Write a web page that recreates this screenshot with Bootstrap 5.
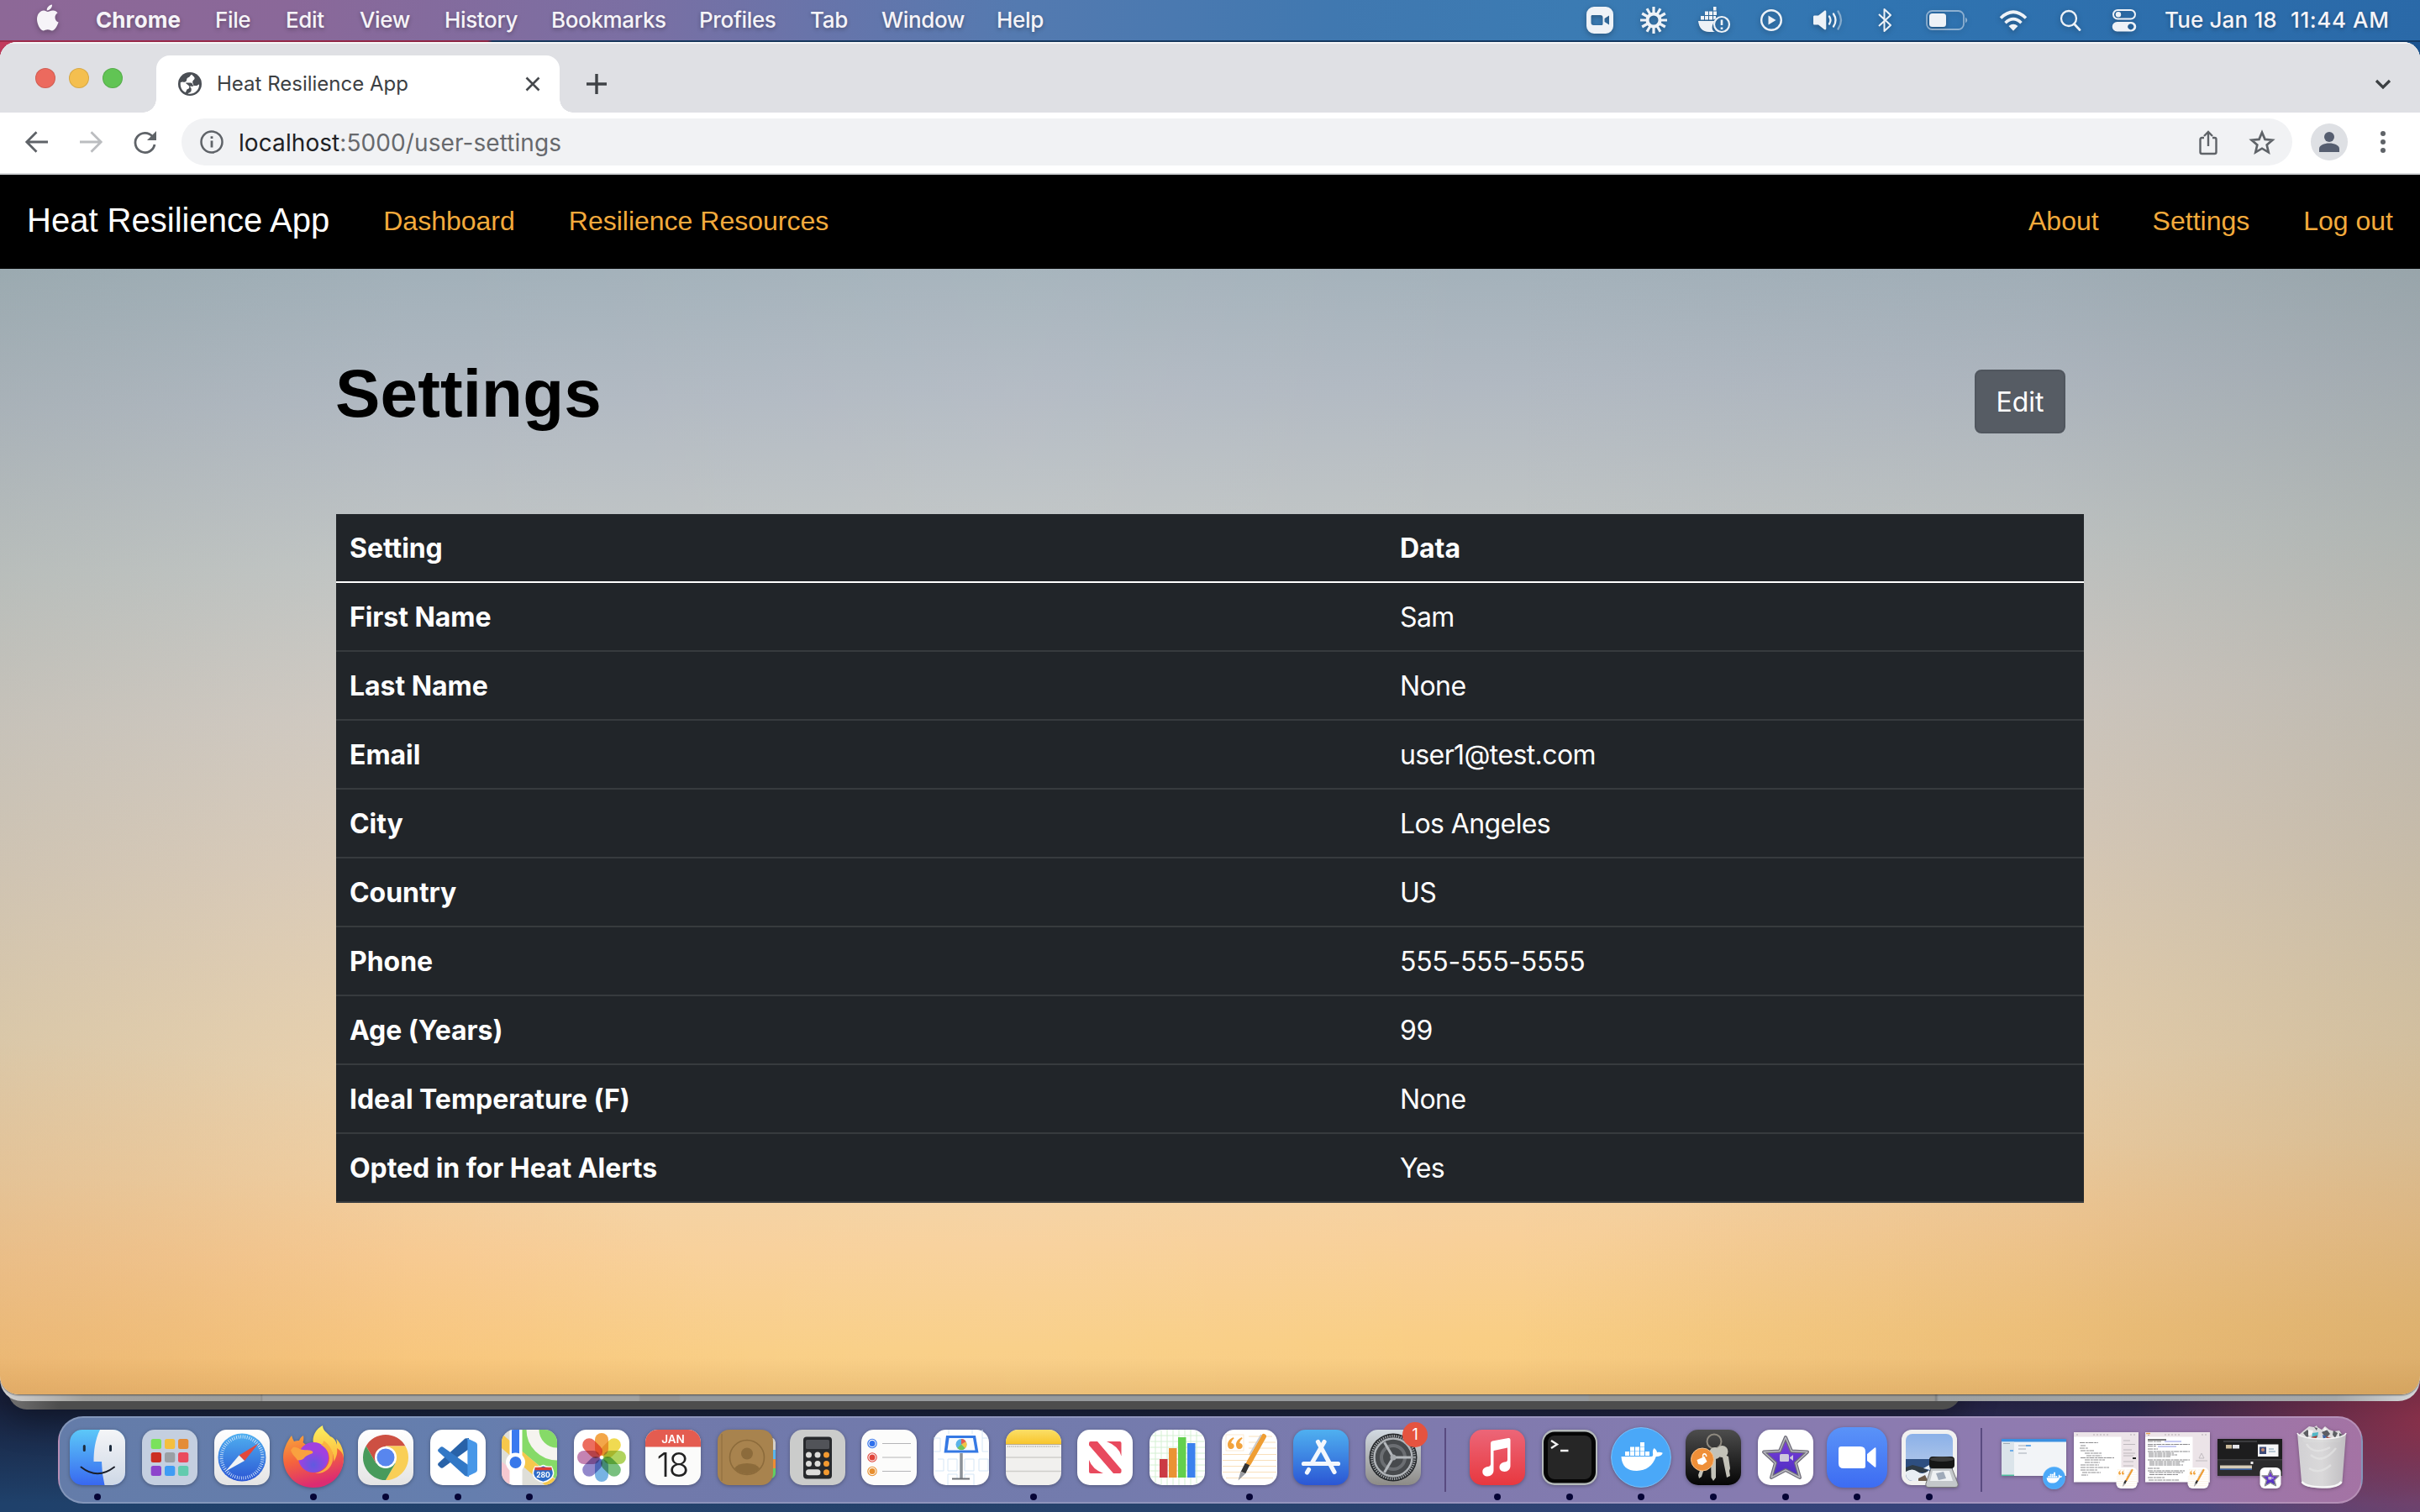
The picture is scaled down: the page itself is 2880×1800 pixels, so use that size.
<!DOCTYPE html>
<html lang="en">
<head>
<meta charset="utf-8">
<meta name="viewport" content="width=device-width, initial-scale=1">
<title>Heat Resilience App</title>
<link href="https://cdn.jsdelivr.net/npm/bootstrap@5.3.0/dist/css/bootstrap.min.css" rel="stylesheet">
<style>
  :root { font-size: 32px; }
  body { font-family: Inter, "Noto Sans", sans-serif; margin: 0; overflow: hidden; }
  svg { display: block; overflow: visible; }
  .desktop {
    width: 2880px; height: 1800px; overflow: hidden;
    background:
      radial-gradient(ellipse 380px 170px at 2920px 1690px, rgba(165,50,72,.8), rgba(165,50,72,0)),
      linear-gradient(180deg, rgba(20,12,30,.62) 1670px, rgba(20,12,30,.5) 1690px, rgba(20,20,40,0) 1790px),
      linear-gradient(90deg, #1f416b 0, #27426c 50%, #36437a 78%, #55497d 100%);
  }
  /* system menu bar */
  .sysbar {
    height: 48px; color: #f6f4f8; font-size: 26px; font-weight: 500; line-height: 48px;
    background: linear-gradient(95deg, #8d6897 0, #8a6899 12%, #7b6fa3 26%, #6575ab 35%, #547ab0 42%, #4078b0 55%, #3b7bb3 65%, #3074b1 78%, #2a69a8 100%);
    text-shadow: 0 2px 5px rgba(0,0,0,.3);
  }
  .sysbar svg { filter: drop-shadow(0 2px 3px rgba(0,0,0,.28)); }
  .sys-menu { display: grid; grid-template-columns: 114px 142px 84px 88px 101px 127px 176px 132px 85px 137px 80px; letter-spacing: -.35px; }
  .sys-menu .app-name { font-weight: 700; letter-spacing: .1px; }
  .sys-status { display: grid; grid-template-columns: 64px 64px 80px 56px 80px 54px 94px 64px 72px 56px 20px 150px 154px; justify-items: center; align-items: center; }
  .sys-status span { justify-self: start; white-space: nowrap; letter-spacing: .15px; }
  .sys-status .clock-time { letter-spacing: .6px; }
  .seam { height: 2px; background: linear-gradient(90deg, #a02c4c 0, #8e2444 580px, #17375c 586px, #123a66 2880px); }
  /* browser window and the ones behind it */
  .stack { height: 1610px; position: relative; background: linear-gradient(90deg, #c23a5c 30px, #1c5490 60px) 0 0 / 100% 30px no-repeat; }
  .browser { height: 1610px; border-radius: 20px 20px 22px 22px; overflow: hidden; position: relative; z-index: 3; background: #fff; box-shadow: inset 0 2px #f3f4f5, 0 1px 2px rgba(0,0,0,.5); }
  .back-a { position: absolute; z-index: 2; inset: 1500px 0 -8px 0; border-radius: 0 0 26px 26px; background: linear-gradient(90deg, #d2d2d2 0, #a3a29f 100px, #9d9d9b 310px, #8b8b89 311px, #a1a2a2 313px, #a1a2a2 760px, #949392 762px, #949392 808px, #969a9d 810px, #969a9d 1890px, #989793 1892px, #989793 2302px, #7d7f80 2304px, #9ea1a2 2307px, #a5a8aa 2780px, #d7d9da 2880px); }
  .back-b { position: absolute; z-index: 1; top: 1500px; bottom: -18px; left: 10px; width: 2324px; border-radius: 0 0 22px 22px; background: linear-gradient(90deg, #727171, #4d4d4d 60px); box-shadow: 0 10px 40px rgba(0,0,0,.4); }
  .tabstrip { height: 84px; background: #dfe0e4; box-shadow: inset 0 2px #f6f6f7; padding: 16px 0 0 42px; }
  .light-dot { width: 24px; height: 24px; border-radius: 50%; margin-right: 16px; box-shadow: inset 0 0 0 1px rgba(0,0,0,.12); }
  .light-close { background: #ec6a5e; }
  .light-min { background: #f4bf4f; }
  .light-max { background: #61c454; }
  .lights { width: 144px; height: 54px; }
  .tabcard { width: 480px; height: 68px; background: #fff; border-radius: 16px 16px 0 0; position: relative; padding: 0 23px 0 26px; font-size: 24px; color: #3c4043; }
  .tabcard::before, .tabcard::after { content: ""; position: absolute; bottom: 0; width: 16px; height: 16px; }
  .tabcard::before { left: -16px; background: radial-gradient(circle at 0 0, transparent 15.5px, #fff 16px); }
  .tabcard::after { right: -16px; background: radial-gradient(circle at 100% 0, transparent 15.5px, #fff 16px); }
  .tab-title { padding-left: 18px; }
  .tab-plus { margin-left: 32px; }
  .tab-caret { margin-right: 35px; }
  .toolbar { height: 74px; background: #fff; border-bottom: 2px solid #d5d7da; padding: 0 32px 2px 28px; }
  .omnibox { height: 56px; width: 2512px; border-radius: 28px; background: #f1f2f4; padding: 0 21px 0 22px; font-size: 28px; letter-spacing: .08px; color: #67696d; margin-left: 28px; }
  .omnibox b { font-weight: 400; color: #202124; }
  .omni-url { padding: 2px 0 0 18px; }
  .avatar { width: 44px; height: 44px; border-radius: 50%; background: #dee0e4; overflow: hidden; margin: 0 38px 0 22px; }
  /* the application page */
  .app-nav { height: 112px; background: #000; padding: 0 32px; font-family: "Liberation Sans", Arial, sans-serif; --bs-navbar-brand-margin-end: 64px; }
  .app-nav .navbar-brand { color: #fff; font-size: 40px; padding: 0 0 4px; line-height: 60px; }
  .app-nav .nav-link { color: #f3aa3c; padding: 0 0 2px; font-size: 32px; }
  .app-nav .navbar-nav { flex-direction: row; gap: 64px; }
  .app-page {
    height: 1340px; padding: 101px 400px 0;
    background:
      linear-gradient(180deg, rgba(150,90,20,0) 1296px, rgba(150,90,20,.13) 1340px),
      radial-gradient(ellipse 900px 420px at 0 100%, rgba(240,160,90,.38), rgba(240,160,90,0)),
      radial-gradient(ellipse 1100px 420px at 100% 100%, rgba(222,152,80,.34), rgba(222,152,80,0)),
      linear-gradient(90deg, rgba(105,120,105,.11) 0, rgba(105,120,105,0) 17%, rgba(255,255,255,.05) 42%, rgba(255,255,255,0) 62%, rgba(70,85,95,.05) 84%, rgba(80,92,80,.16) 100%),
      linear-gradient(179deg, #a1b0b9 0, #b1b9c2 12%, #c2c6c5 26%, #d2cbc3 39%, #dccdbb 52%, #e7d1b1 65%, #f1d3a8 78%, #f8d09a 85%, #f9ce84 94%, #f8cb80 100%);
  }
  .app-page h1 { font-family: "Liberation Sans", Arial, sans-serif; font-weight: 700; font-size: 80px; color: #000; letter-spacing: .15px; margin: 0 0 95px -1px; }
  .btn-edit { --bs-btn-bg: #565c64; --bs-btn-border-color: #50565e; --bs-btn-color: #fff; --bs-btn-border-width: 2px; --bs-btn-border-radius: 8px; margin: 19px 22px 0 0; height: 76px; width: 108px; padding: 12px 0 10px; }
  .app-table { --bs-table-bg: #212529; --bs-table-border-color: #373b3e; color: #fff; font-size: 32px; line-height: 48px; margin: 0; }
  .app-table > :not(caption) > * > * { padding: 17px 16px 15px; border-bottom-width: 2px; }
  .app-table thead th { border-bottom-color: #fff; }
  .app-table th { font-weight: 700; letter-spacing: -.05px; }
  .app-table td { letter-spacing: -.6px; }
  .app-table .cell-digits { letter-spacing: -.3px; }
  .app-table .col-setting { width: 1250px; }
  /* dock */
  .dock { margin: 26px 0 0 69px; width: 2743px; height: 104px; border-radius: 30px; padding-left: 2.4px; border: 2px solid rgba(255,255,255,.2);
    background: linear-gradient(90deg, #647ca9 0, #657eae 18%, #7079ab 26%, #737bad 45%, #7f7aae 60%, #857bb0 72%, #907bb0 86%, #a473a4 100%); position: relative; z-index: 5; }
  .slot { width: 85.67px; padding-top: 14px; position: relative; display: flex; flex-direction: column; align-items: center; flex: none; }
  .slot > svg { width: 66px; height: 66px; filter: drop-shadow(0 1px 2px rgba(0,0,0,.3)); }
  .slot.running::after { content: ""; width: 8px; height: 8px; border-radius: 50%; background: #060536; margin-top: 10px; }
  .rule { width: 38.3px; padding-top: 12px; flex: none; }
  .rule::after { content: ""; display: block; width: 2px; height: 76px; margin: 0 auto; background: #594b80; }
  .alert-count { position: absolute; left: 54px; top: 5px; width: 30px; height: 30px; border-radius: 50%; background: #e5533f; color: #fff; font-size: 18px; line-height: 30px; text-align: center; }
  .petal { mix-blend-mode: multiply; }
</style>
</head>
<body>
<svg width="0" height="0" class="position-absolute" aria-hidden="true">
  <defs>
    <linearGradient id="gFinder" x2="0" y2="1"><stop stop-color="#5cc8f8"/><stop offset="1" stop-color="#3868f0"/></linearGradient>
    <linearGradient id="gPaper" x2="0" y2="1"><stop stop-color="#fff"/><stop offset="1" stop-color="#e4e4e4"/></linearGradient>
    <linearGradient id="gFaceR" x2="0" y2="1"><stop stop-color="#f4f5f7"/><stop offset="1" stop-color="#ced8e6"/></linearGradient>
    <linearGradient id="gBlue" x2="0" y2="1"><stop stop-color="#4fb0f0"/><stop offset="1" stop-color="#2b56d4"/></linearGradient>
    <linearGradient id="gZoom" x2="0" y2="1"><stop stop-color="#5a93f8"/><stop offset="1" stop-color="#3d6cf2"/></linearGradient>
    <linearGradient id="gMusic" x2="0" y2="1"><stop stop-color="#ec6678"/><stop offset="1" stop-color="#e8383f"/></linearGradient>
    <linearGradient id="gFox" x2=".3" y2="1"><stop stop-color="#f8a83c"/><stop offset=".5" stop-color="#f5653c"/><stop offset="1" stop-color="#dc2c72"/></linearGradient>
    <linearGradient id="gFlame" x2="0" y2="1"><stop stop-color="#fdf060"/><stop offset=".5" stop-color="#fbc040"/><stop offset="1" stop-color="#f5663c"/></linearGradient>
    <radialGradient id="gCore" cx=".5" cy=".75"><stop stop-color="#5f5ae0"/><stop offset="1" stop-color="#a040e0"/></radialGradient>
    <linearGradient id="gKeys" x2="0" y2="1"><stop stop-color="#4d4d4d"/><stop offset="1" stop-color="#050505"/></linearGradient>
    <linearGradient id="gSys" x2="0" y2="1"><stop stop-color="#d2dae2"/><stop offset="1" stop-color="#8d8b87"/></linearGradient>
    <linearGradient id="gNote" x2="0" y2="1"><stop stop-color="#fbdf68"/><stop offset="1" stop-color="#f8c52c"/></linearGradient>
    <linearGradient id="gBag" x2="1"><stop stop-color="#d4d4d6"/><stop offset=".5" stop-color="#dcdcdc"/><stop offset="1" stop-color="#c2c1c3"/></linearGradient>
    <linearGradient id="gStar" x2="0" y2="1"><stop stop-color="#8040dc"/><stop offset="1" stop-color="#4a2cc0"/></linearGradient>
    <linearGradient id="gSky" x2="0" y2="1"><stop stop-color="#86aee8"/><stop offset="1" stop-color="#c5d3ea"/></linearGradient>
    <clipPath id="tile"><rect width="66" height="66" rx="15"/></clipPath>
    <symbol id="docker" viewBox="0 0 72 72" overflow="visible">
      <circle cx="36" cy="36" r="35.4" fill="#4aa8f8" stroke="#78c2fb"/>
      <path fill="#fff" d="M12.500 35H48c2 0 2.500-1.500 2-4-.4-2 .2-4.500 1.500-6 2 1 3.300 3 3.500 5 2.500-.6 5-.4 6.800.8-1.200 3-4 4.400-8 4.300C50 46 42 52 31 52c-12 0-18-6-18.500-17z"/>
      <path fill="#fff" d="M17 29h5v5h-5zm6 0h5v5h-5zm6 0h5v5h-5zm6 0h5v5h-5zm6 0h5v5h-5zM23 23.500h5v5h-5zm6 0h5v5h-5zm6 0h5v5h-5zM35 18h5v5h-5z"/>
    </symbol>
    <symbol id="pages" viewBox="0 0 66 66" overflow="visible">
      <rect width="66" height="66" rx="15" fill="#fff"/>
      <path d="M1 29.500h64M1 36.500h64M1 43.500h64M1 50.500h64M5 57.500h56M32 8h28M32 15h32M32 22h33" stroke="#f9e0bb" stroke-width="1"/>
      <rect x="5" y="6" width="21" height="19" fill="#fff" stroke="#f8e3c4" stroke-width=".7"/>
      <path fill="#f2a33c" d="M14 9c-4 1.500-7 5-7 9 0 3 1.600 5 4 5 2.200 0 3.700-1.500 3.700-3.600S13.200 16 11.300 16c.3-2.300 1.200-4 3.200-5.200zM24 9c-4 1.500-7 5-7 9 0 3 1.600 5 4 5 2.200 0 3.700-1.500 3.700-3.600S23.200 16 21.300 16c.3-2.300 1.200-4 3.200-5.200z"/>
      <path d="M50 8 32 40" stroke="#ef9e34" stroke-width="6" stroke-linecap="round"/>
      <path d="M47 6 33 30" stroke="#c9c9cc" stroke-width="1.800"/>
      <path d="m30.500 41-5 10" stroke="#333" stroke-width="6"/>
      <path d="m22.500 49.500 5.500 3-8.500 8z" fill="#9a9ca0"/>
    </symbol>
    <symbol id="imovie" viewBox="0 0 66 66" overflow="visible">
      <rect width="66" height="66" rx="15" fill="#fff"/>
      <path d="M33 9l7 16.500 19 1-14 13 5 17.500-17-9-17 9 5-17.500-14-13 19-1z" fill="url(#gStar)" stroke="#6e6c78" stroke-width="4" stroke-linejoin="round"/>
      <path d="M33 9l7 16.500 19 1-14 13 5 17.500-17-9-17 9 5-17.500-14-13 19-1z" fill="none" stroke="#b9b9c0" stroke-width="1.500" stroke-linejoin="round"/>
      <rect x="26" y="29" width="11" height="9" rx="1.500" fill="#cdc6dc"/><path d="m38 33 4-3v7l-4-3z" fill="#cdc6dc"/>
    </symbol>
  </defs>
</svg>

<div class="desktop d-flex flex-column">
  <header class="sysbar d-flex justify-content-between flex-shrink-0">
    <nav class="sys-menu">
      <svg width="113" height="48" viewBox="0 0 113 48" fill="#f6f4f8"><path d="M62 5.500c.4 3.200-2.700 7-6.200 6.900C55.300 9.200 58.500 5.900 62 5.500zM56.800 14c1.400 0 3.600-1.800 6.500-1.600 2.200.1 4.100 1.100 5.300 2.800-4.600 2.900-3.800 9.400 1 11.300-1.700 4.800-4.500 9.800-7.600 9.900-2 .1-2.700-1.200-5.200-1.200-2.600 0-3.400 1.200-5.300 1.200C47.800 36.500 44 28.400 44 23c0-6.300 4-10.300 8-10.400 2.200 0 3.600 1.400 4.800 1.400z"/></svg>
      <span class="app-name">Chrome</span><span>File</span><span>Edit</span><span>View</span><span>History</span><span>Bookmarks</span><span>Profiles</span><span>Tab</span><span>Window</span><span>Help</span>
    </nav>
    <div class="sys-status">
      <svg width="32" height="32" viewBox="0 0 32 32"><path fill="#eef2f7" fill-rule="evenodd" d="M9 0h14a9 9 0 0 1 9 9v14a9 9 0 0 1-9 9H9a9 9 0 0 1-9-9V9a9 9 0 0 1 9-9zm-2 10c-1 0-1.500.6-1.500 1.500V19c0 2 1 3 3 3h9.500c1 0 1.500-.6 1.500-1.500V13c0-2-1-3-3-3zm20 .5-5.500 3.500v4l5.500 3.500z"/></svg>
      <svg width="32" height="32" viewBox="-16 -16 32 32" stroke="#eef2f7" stroke-width="3.200"><circle r="7.500" fill="none" stroke-width="4"/><path d="M0-7v-9M0 7v9M7 0h9M-7 0h-9M3.500-6 8-13.800M-3.500-6-8-13.800M3.500 6 8 13.800M-3.500 6-8 13.800M6-3.500 13.800-8M-6-3.500-13.800-8M6 3.500 13.800 8M-6 3.500-13.800 8"/></svg>
      <svg width="38" height="34" viewBox="0 0 38 34"><path fill="#eef2f7" d="M0 18h20c-4 4-5 11 0 13H13C5 31 1 26 0 18zM3 12h4v4.500H3zm5 0h4v4.500H8zm5 0h4v4.500h-4zM8 6.500h4V11H8zm5 0h4V11h-4zm5 5.500h3v3l-3 1.500zm0-5.500h4V11h-4zM18 1h3.500v4.500H18z"/><circle cx="28" cy="22" r="9" fill="none" stroke="#eef2f7" stroke-width="2.200"/><path d="M28 16.500V23M28 25.500v2.500" stroke="#eef2f7" stroke-width="2.600"/></svg>
      <svg width="28" height="28" viewBox="0 0 28 28"><circle cx="14" cy="14" r="11.800" fill="none" stroke="#eef2f7" stroke-width="2.400"/><path fill="#eef2f7" d="m10.500 8.500 9 5.500-9 5.500z"/></svg>
      <svg width="36" height="28" viewBox="0 0 36 28"><path fill="#eef2f7" d="M0 10c0-1 .6-1.500 1.500-1.500H6L13 3c1-.8 2.300-.3 2.300 1v20c0 1.300-1.300 1.800-2.300 1l-7-5.500H1.500C.6 19.500 0 19 0 18z"/><g fill="none" stroke="#eef2f7" stroke-width="2.300" stroke-linecap="round"><path d="M19 9.500q3 4.500 0 9M24 6.500q5 7.500 0 15"/><path d="M29.500 3.500q7 10.500 0 21" opacity=".45"/></g></svg>
      <svg width="18" height="30" viewBox="0 0 18 30"><path d="m2 8 14 13-7.500 7V2L16 9 2 22" fill="none" stroke="#eef2f7" stroke-width="2" stroke-linejoin="round"/></svg>
      <svg width="50" height="24" viewBox="0 0 50 24"><rect x="1" y="1" width="44" height="22" rx="6.500" fill="none" stroke="#eef2f7" stroke-width="1.800" opacity=".5"/><rect x="4" y="4" width="20" height="16" rx="3.500" fill="#eef2f7"/><path d="M47 8.500q4.500 3.500 0 7z" fill="#eef2f7" opacity=".5"/></svg>
      <svg width="34" height="25" viewBox="0 0 34 25"><g fill="none" stroke="#eef2f7" stroke-width="3.600"><path d="M2 9.500q15-14.500 30 0M7.500 15.200q9.500-9 19 0"/></g><path fill="#eef2f7" d="M11.500 19q5.500-4.500 11 0L17 24.800z"/></svg>
      <svg width="26" height="26" viewBox="0 0 26 26" fill="none" stroke="#eef2f7"><circle cx="11" cy="11" r="9" stroke-width="2.300"/><path d="m17.500 17.500 6.500 7" stroke-width="2.800" stroke-linecap="round"/></svg>
      <svg width="28" height="27" viewBox="0 0 28 27"><rect x="1" y="1" width="26" height="10.500" rx="5.250" fill="none" stroke="#eef2f7" stroke-width="2"/><circle cx="7" cy="6.200" r="3.200" fill="#eef2f7"/><path fill="#eef2f7" fill-rule="evenodd" d="M5.500 15h17a5.700 5.700 0 0 1 0 11.500h-17a5.700 5.700 0 0 1 0-11.500zm16.300 2.200a3.600 3.600 0 1 0 .01 0z"/></svg>
      <i></i><span>Tue Jan 18</span><span class="clock-time">11:44 AM</span>
    </div>
  </header>
  <div class="seam flex-shrink-0"></div>

  <div class="stack flex-shrink-0">
    <div class="back-b"></div>
    <div class="back-a"></div>
    <div class="browser">
      <div class="tabstrip d-flex">
        <div class="lights d-flex align-items-center">
          <div class="light-dot light-close"></div><div class="light-dot light-min"></div><div class="light-dot light-max"></div>
        </div>
        <div class="tabcard d-flex align-items-center">
          <svg width="28" height="28" viewBox="0 0 28 28"><circle cx="14" cy="14" r="14" fill="#4b4f55"/><path fill="#fff" d="M16.500 2.800c-2.600.8-2.300 3-4.800 3.700-2.300.7-.8 3.700-2.800 4.700-1.500.8-4.500.3-6 .8C2 17 4.500 22 8.500 24c1.500-.5 1-3.500 3-4.100 2.300-.7 2.300-3.200.6-4.500-1.300-1-2.600-1.500-3.100-2.900h6.200c2.500.4 1.500 3.500 4 3.500H22c1 0 1.800-1.200 3-1.500.3 4.500-2.600 8.800-7 10.500-2.500 1-5 .9-6.500.4 1-1 3.500-1.500 4-3 .8-2.500-.2-4.300-2-5.600h4.500c1.200-2-1.500-4-.7-5.800.5-1.800 2.700-2.300 2.200-4.500-.4-1.700-2.800-2-3-3.700z"/></svg>
          <span class="tab-title">Heat Resilience App</span>
          <svg class="ms-auto" width="18" height="18" viewBox="0 0 18 18" stroke="#46494d" stroke-width="2.600"><path d="m1.500 1.500 15 15m0-15-15 15"/></svg>
        </div>
        <svg class="tab-plus" width="24" height="68" viewBox="0 0 24 68" stroke="#3f4246" stroke-width="3.400"><path d="M12 22v24M0 34h24"/></svg>
        <svg class="tab-caret ms-auto" width="18" height="68" viewBox="0 0 18 68" fill="none" stroke="#3c4043" stroke-width="3.200"><path d="m1 30 8 8 8-8"/></svg>
      </div>
      <div class="toolbar d-flex align-items-center">
        <svg width="160" height="32" viewBox="0 0 160 32" fill="none" stroke-width="2.800"><g stroke="#5f6368"><path d="M29 16H4M15.500 4.300 3.800 16l11.700 11.700"/></g><g stroke="#bbbdc0"><path d="M67 16h25M80.500 4.300 92.200 16l-11.700 11.700"/></g><path d="M153.500 9.500A11.600 11.600 0 1 0 156 19" stroke="#5f6368"/><path d="M158 3v11h-11z" fill="#5f6368"/></svg>
        <div class="omnibox d-flex align-items-center">
          <svg width="28" height="28" viewBox="0 0 28 28" fill="none" stroke="#5f6368" stroke-width="2.500"><circle cx="14" cy="14" r="12.500"/><path d="M14 12.500v8M14 7.200v2.800" stroke-width="2.800"/></svg>
          <span class="omni-url"><b>localhost</b>:5000/user-settings</span>
          <svg class="ms-auto" width="92" height="32" viewBox="0 0 92 32" fill="none" stroke="#5f6368" stroke-width="2.400"><path d="M8 11H5.500Q3.500 11 3.500 13v15q0 2 2 2h15q2 0 2-2V13q0-2-2-2H18M13 21V4M8 9l5-5 5 5"/><path stroke-width="2.700" d="m77 4.700 3.500 8.200 8.900.8-6.700 5.900 2 8.700L77 23.700l-7.700 4.600 2-8.700-6.700-5.900 8.900-.8z"/></svg>
        </div>
        <svg class="avatar" viewBox="0 0 44 44" fill="#565e70"><circle cx="22" cy="16" r="6"/><path d="M10 34v-4c0-4 6-6.500 12-6.500S34 26 34 30v4z"/></svg>
        <svg width="8" height="28" viewBox="0 0 8 28" fill="#5f6368"><circle cx="4" cy="4" r="3"/><circle cx="4" cy="14" r="3"/><circle cx="4" cy="24" r="3"/></svg>
      </div>

      <nav class="app-nav navbar navbar-expand d-flex flex-nowrap">
        <a class="navbar-brand" href="#">Heat Resilience App</a>
        <div class="navbar-nav">
          <a class="nav-link px-0" href="#">Dashboard</a>
          <a class="nav-link px-0" href="#">Resilience Resources</a>
        </div>
        <div class="navbar-nav ms-auto">
          <a class="nav-link px-0" href="#">About</a>
          <a class="nav-link px-0" href="#">Settings</a>
          <a class="nav-link px-0" href="#">Log out</a>
        </div>
      </nav>
      <main class="app-page">
        <div class="d-flex justify-content-between align-items-start">
          <h1>Settings</h1>
          <button class="btn btn-edit" type="button">Edit</button>
        </div>
        <table class="table table-dark app-table">
          <thead><tr><th class="col-setting" scope="col">Setting</th><th scope="col">Data</th></tr></thead>
          <tbody>
            <tr><th scope="row">First Name</th><td>Sam</td></tr>
            <tr><th scope="row">Last Name</th><td>None</td></tr>
            <tr><th scope="row">Email</th><td>user1@test.com</td></tr>
            <tr><th scope="row">City</th><td>Los Angeles</td></tr>
            <tr><th scope="row">Country</th><td>US</td></tr>
            <tr><th scope="row">Phone</th><td class="cell-digits">555-555-5555</td></tr>
            <tr><th scope="row">Age (Years)</th><td class="cell-digits">99</td></tr>
            <tr><th scope="row">Ideal Temperature (F)</th><td>None</td></tr>
            <tr><th scope="row">Opted in for Heat Alerts</th><td>Yes</td></tr>
          </tbody>
        </table>
      </main>
    </div>
  </div>

  <footer class="dock d-flex flex-shrink-0">
    <!-- Finder -->
    <div class="slot running"><svg viewBox="0 0 66 66"><g clip-path="url(#tile)"><rect width="66" height="66" fill="url(#gFinder)"/><path fill="url(#gFaceR)" d="M36 0C30 12 28.500 26 28.500 38H38q0 14 3.500 28H66V0z"/></g><path d="M17.300 19.500v5M48.500 19.500v5" stroke="#1c2b3c" stroke-width="3" stroke-linecap="round"/><path d="M13.500 44.500q19.500 15.500 39.500 0" fill="none" stroke="#1a1e28" stroke-width="2" stroke-linecap="round"/></svg></div>
    <!-- Launchpad -->
    <div class="slot"><svg viewBox="0 0 66 66"><rect width="66" height="66" rx="15" fill="#c4cfe0"/><rect x="10.700" y="11" width="12.300" height="12" rx="2.500" fill="#7ae25c"/><rect x="27" y="11" width="12.300" height="12" rx="2.500" fill="#f4bf3f"/><rect x="43" y="11" width="12.300" height="12" rx="2.500" fill="#e48c36"/><rect x="10.700" y="27" width="12.300" height="12" rx="2.500" fill="#cc2e22"/><rect x="27" y="27" width="12.300" height="12" rx="2.500" fill="#9a9fa4"/><rect x="43" y="27" width="12.300" height="12" rx="2.500" fill="#ea4b5c"/><rect x="10.700" y="43" width="12.300" height="12" rx="2.500" fill="#8d44cc"/><rect x="27" y="43" width="12.300" height="12" rx="2.500" fill="#3f9cf4"/><rect x="43" y="43" width="12.300" height="12" rx="2.500" fill="#62cbae"/></svg></div>
    <!-- Safari -->
    <div class="slot"><svg viewBox="0 0 66 66"><rect width="66" height="66" rx="15" fill="url(#gPaper)"/><circle cx="33" cy="33" r="28.500" fill="url(#gBlue)"/><circle cx="33" cy="33" r="24.500" fill="none" stroke="#dcecfb" stroke-width="4" stroke-dasharray=".8 1.766"/><path d="M52.500 16.500 29.500 30.500 36 37z" fill="#e2473c"/><path d="M13.500 49.500 29.500 30.500 36 37z" fill="#f1f3f5"/></svg></div>
    <!-- Firefox -->
    <div class="slot running"><svg viewBox="0 0 66 66"><path fill="url(#gFlame)" d="M33 16C31 8 36-1 44-5c0 6 5 8 9 13 5 2 7 6 8 10 0-4-.6-6-1-7 6 5 9 14 9 22 0 20-16 34-35 34z"/><path fill="url(#gFox)" d="M7 7c1 3 2 5 3 7 2-1 4-1 6-1 1-3 3-5 5-6 .6 3 .4 6-.4 8 3 3 5 4 10 5L49 20c6 4 9 10 8 18 3-4 5-10 4-16 6 4 8 8 8 13C68 56 52 69 33 69 13 69-3 54-3 33-3 24 1 15 7 7z"/><circle cx="33" cy="33" r="18" fill="url(#gCore)"/><path fill="#f9a13f" d="M9 21c5-1 7 3 12 3 5 .5 9 0 11 2 .5 1 .5 2-1 2.500-3 1-6 2-8 4-2 3-5 4-9 4-2-4-6-6-8-12 1-1.500 2-3 3-3.500z"/><path fill="#fbb040" opacity=".95" d="M45 13c8 5 13 14 11 24-2 9-10 16-21 15 10-2 17-9 17-18 0-8-5-13-10-16 2-1 3-3 3-5z"/></svg></div>
    <!-- Chrome -->
    <div class="slot running"><svg viewBox="0 0 66 66"><rect width="66" height="66" rx="15" fill="url(#gPaper)"/><path fill="#cd5043" d="M9.600 19.500A27 27 0 0 1 56.400 19.500H33L21.300 39.750z"/><path fill="#f9cf57" d="M56.400 19.500A27 27 0 0 1 33 60L44.700 39.750 33 19.500z"/><path fill="#489b5c" d="M33 60A27 27 0 0 1 9.600 19.500L21.300 39.750H44.700z"/><circle cx="33" cy="33" r="13" fill="#fff"/><circle cx="33" cy="33" r="10.500" fill="#5886ee"/></svg></div>
    <!-- VS Code -->
    <div class="slot running"><svg viewBox="0 0 66 66"><rect width="66" height="66" rx="15" fill="#fff"/><path fill="#2862a8" d="m9.500 40 32-29.500L46 10v13L15 45.500q-2 .5-3-.5l-2.500-2.500q-1-1.300 0-2.500z"/><path fill="#3278c6" d="m9.500 26 32 29 4.500 1V42.500L15 20.500q-2-.5-3 .5l-2.500 2.500q-1 1.300 0 2.500z"/><path fill="#4797e8" d="m43.500 10 10.500 5q2 1 2 3v30q0 2-2 3l-10.500 5q.9-.8.900-3V13q0-2-.9-3z"/></svg></div>
    <!-- Maps -->
    <div class="slot running"><svg viewBox="0 0 66 66"><g clip-path="url(#tile)"><rect width="66" height="66" fill="#deded8"/><path fill="#86da68" d="M24 0h42v60L24 26z"/><circle cx="66" cy="0" r="29" fill="none" stroke="#f5f4ef" stroke-width="15"/><path d="M-4 10 64 68" stroke="#f6c84c" stroke-width="13"/><path fill="#f6c8d0" d="M0 38 10 46v20H0z"/><path d="M17 0v66" stroke="#fff" stroke-width="15"/><path d="M16.500 0v36" stroke="#3a7af0" stroke-width="9"/></g><circle cx="16.500" cy="39" r="11.500" fill="#fff"/><circle cx="16.500" cy="39" r="7" fill="#3878ea"/><path fill="#2d6cc8" stroke="#fff" stroke-width="1.500" d="M40 44q5 1 9.500-1.500Q54 45 59 44q3 5 2.500 9Q60 60 49.500 62.500 39 60 37.500 53q-.5-4 2.500-9z"/><path d="M39.500 46.500h20" stroke="#dc3c34" stroke-width="3.500"/><text x="49.500" y="56.500" font-family="Inter, sans-serif" font-size="8.500" font-weight="700" fill="#fff" text-anchor="middle">280</text></svg></div>
    <!-- Photos -->
    <div class="slot"><svg viewBox="0 0 66 66"><rect width="66" height="66" rx="15" fill="#fff"/><g opacity=".88"><rect x="25" y="4" width="16" height="27" rx="8" fill="#f29a30"/><rect class="petal" x="25" y="4" width="16" height="27" rx="8" fill="#efd63a" transform="rotate(45 33 33)"/><rect class="petal" x="25" y="4" width="16" height="27" rx="8" fill="#a6ce48" transform="rotate(90 33 33)"/><rect class="petal" x="25" y="4" width="16" height="27" rx="8" fill="#67b86e" transform="rotate(135 33 33)"/><rect class="petal" x="25" y="4" width="16" height="27" rx="8" fill="#66a9e0" transform="rotate(180 33 33)"/><rect class="petal" x="25" y="4" width="16" height="27" rx="8" fill="#8478c4" transform="rotate(225 33 33)"/><rect class="petal" x="25" y="4" width="16" height="27" rx="8" fill="#bd72a8" transform="rotate(270 33 33)"/><rect class="petal" x="25" y="4" width="16" height="27" rx="8" fill="#ea5a48" transform="rotate(315 33 33)"/></g></svg></div>
    <!-- Calendar -->
    <div class="slot"><svg viewBox="0 0 66 66"><g clip-path="url(#tile)"><rect width="66" height="66" fill="#fbfbfa"/><rect width="66" height="20.500" fill="#e45c50"/></g><text x="33" y="15.500" font-family="Inter, sans-serif" font-size="13.500" font-weight="600" fill="#fff" text-anchor="middle">JAN</text><text x="32" y="55.500" font-family="Inter, sans-serif" font-size="40" font-weight="300" letter-spacing="-1.500" fill="#222" text-anchor="middle">18</text></svg></div>
    <!-- Contacts -->
    <div class="slot"><svg viewBox="0 0 66 66"><path fill="#d4d0c8" d="M62 10h4q3 2 3 5v10h-7z"/><path fill="#5ab6ec" d="M62 24h7v11h-7z"/><path fill="#ee8c34" d="M62 35h7v11h-7z"/><path fill="#62cf60" d="M62 46h7v6q0 5-7 7z"/><rect width="66" height="66" rx="14" fill="#a8834e"/><path d="M5 5v56" stroke="#8d6c3d" stroke-width="1"/><circle cx="35" cy="33" r="20.500" fill="none" stroke="#8c6b3b" stroke-width="1.600"/><circle cx="35" cy="28.500" r="7" fill="#8c6b3b"/><path fill="#8c6b3b" d="M20 46q4-6 15-6t15 6q-6 7-15 7t-15-7z"/></svg></div>
    <!-- Calculator -->
    <div class="slot"><svg viewBox="0 0 66 66"><rect width="66" height="66" rx="15" fill="#cbcccb"/><rect x="16" y="8.500" width="34" height="50" rx="4" fill="#27292c"/><rect x="19" y="12" width="28" height="11" rx="1.500" fill="#515358"/><g fill="#dcdcda"><circle cx="22.500" cy="30" r="3.500"/><circle cx="33" cy="30" r="3.500"/><circle cx="22.500" cy="40.500" r="3.500"/><circle cx="33" cy="40.500" r="3.500"/><rect x="19" y="47.300" width="17.500" height="7" rx="3.500"/></g><g fill="#f39a30"><circle cx="43.500" cy="30" r="3.500"/><circle cx="43.500" cy="40.500" r="3.500"/><circle cx="43.500" cy="50.800" r="3.500"/></g></svg></div>
    <!-- Reminders -->
    <div class="slot"><svg viewBox="0 0 66 66"><rect width="66" height="66" rx="15" fill="#fcfcfb"/><g fill="none" stroke-width="1.100"><circle cx="13" cy="16.500" r="5.200" stroke="#2f70ec"/><circle cx="13" cy="33" r="5.200" stroke="#e0443a"/><circle cx="13" cy="49.500" r="5.200" stroke="#e88f2e"/></g><circle cx="13" cy="16.500" r="3.500" fill="#2f70ec"/><circle cx="13" cy="33" r="3.500" fill="#e0443a"/><circle cx="13" cy="49.500" r="3.500" fill="#e88f2e"/><path d="M25 16.500h34M25 33h34M25 49.500h34" stroke="#b5b5b8" stroke-width="1.200"/></svg></div>
    <!-- Keynote -->
    <div class="slot"><svg viewBox="0 0 66 66"><rect width="66" height="66" rx="15" fill="#fff"/><g fill="none" stroke="#d5e6f6" stroke-width="1"><path d="M18 0v5M46 0v5M58 0v26h7M58 10h7M0 10h8v16H0M5 35h7v14H2M17 35h11v14H17zM37 35h11v14H37zM54 35h11v14H54zM17 66V53h11v5M37 58v-5h11v13"/></g><path d="M33 28v30" stroke="#8c9299" stroke-width="3.500"/><path d="M22 58.500h21" stroke="#6c7076" stroke-width="2"/><path fill="#3478e4" d="M15 7h35l3.500 20.500h-41z"/><path fill="#f7fafd" d="M18.500 10h28.500l2.500 14.500h-33z"/><circle cx="33" cy="17.500" r="6.500" fill="#5ab2e8"/><path fill="#eb5a4c" d="M33 17.500V11a6.500 6.500 0 0 1 5.600 3.300z"/><path fill="#f5c242" d="m33 17.500 5.600-3.200a6.500 6.500 0 0 1-1 8z"/><path fill="#71c65a" d="m33 17.500 4.600 4.800a6.500 6.500 0 0 1-9.400-.2z"/></svg></div>
    <!-- Notes -->
    <div class="slot running"><svg viewBox="0 0 66 66"><g clip-path="url(#tile)"><rect width="66" height="66" fill="#f1f0ee"/><rect width="66" height="17" fill="url(#gNote)"/><path d="M0 17.500h66" stroke="#b8a988" stroke-width="1.200"/><path d="M2 20h62" stroke="#b8b6b2" stroke-width="2" stroke-dasharray="1 1.200"/><path d="M0 33h66M0 49.500h66" stroke="#cfcecb" stroke-width="1.300"/></g></svg></div>
    <!-- News -->
    <div class="slot"><svg viewBox="0 0 66 66"><rect width="66" height="66" rx="15" fill="#fff"/><path fill="#e84a5e" d="M16 14h8l28.500 33.500V50q0 2-2 2H43L14 18.500V16q0-2 2-2zM35 14h15.500q2 0 2 2v15.500Q50 20 35 14zM14 36v14q0 2 2 2h15Q18 47 14 36z"/></svg></div>
    <!-- Numbers -->
    <div class="slot"><svg viewBox="0 0 66 66"><rect width="66" height="66" rx="15" fill="#fff"/><path d="M7 3v60M14 1v64M21 0v66M28 0v66M35 0v66M42 0v66M49 0v66M56 2v62M3 7h60M1 14h64M0 21h66M0 28h66M0 35h66M0 42h66M0 49h66M2 56h62" stroke="#d4f0d2" stroke-width="1"/><path fill="#cb3a44" d="M12 35h9.500v22H12z"/><path fill="#ea9334" d="M23 22h9.500v35H23z"/><path fill="#63d04e" d="M34 9h9.500v48H34z"/><path fill="#3b82ee" d="M45 16h9.500v41H45z"/></svg></div>
    <!-- Pages -->
    <div class="slot running"><svg><use href="#pages" width="66" height="66"/></svg></div>
    <!-- App Store -->
    <div class="slot"><svg viewBox="0 0 66 66"><rect width="66" height="66" rx="15" fill="url(#gBlue)"/><g stroke="#f3f7fd" stroke-width="5.200" stroke-linecap="round"><path d="M12.500 40.500h41M37 14.500 23 38.500M29.500 14.500l19.500 36M18.500 47.500l-2 3.500"/></g></svg></div>
    <!-- System Preferences -->
    <div class="slot"><svg viewBox="0 0 66 66"><rect width="66" height="66" rx="15" fill="url(#gSys)"/><circle cx="33" cy="33" r="28.500" fill="#24272a"/><circle cx="33" cy="33" r="25.500" fill="none" stroke="#9ea2a6" stroke-width="3" stroke-dasharray="1.400 1.270"/><circle cx="33" cy="33" r="22.500" fill="#474a4d" stroke="#b0b4b8" stroke-width="2.500"/><circle cx="33" cy="33" r="14" fill="none" stroke="#6b6e72" stroke-width="4"/><path d="M33 33h21M33 33 22.500 15M33 33 22.500 51" stroke="#b4b8bc" stroke-width="3"/><circle cx="33" cy="33" r="3.500" fill="#a5a9ad"/></svg><span class="alert-count">1</span></div>
    <div class="rule"></div>
    <!-- Music -->
    <div class="slot running"><svg viewBox="0 0 66 66"><rect width="66" height="66" rx="15" fill="url(#gMusic)"/><path fill="#fff" d="M25 16q0-2 2-2.500l19-3.500q2.500-.4 2.500 2v31c0 4-3 7-7 7-3.500 0-6-2-6-5.200 0-3.600 2.800-5.600 6.200-6.200 2.400-.4 3.300-1 3.300-3.200V21.500L28.500 25v23.500c0 4-3.200 7-7.200 7-3.500 0-6-2.200-6-5.300 0-3.600 2.800-5.400 6.200-6.100 2.500-.5 3.500-1.100 3.500-3.300z"/></svg></div>
    <!-- Terminal -->
    <div class="slot running"><svg viewBox="0 0 66 66"><rect width="66" height="66" rx="15" fill="#b5babb"/><rect x="2" y="2.500" width="62" height="61" rx="13" fill="#050505"/><rect x="7" y="7" width="52" height="52" rx="8" fill="#262626"/><path d="m11 13 7 4.500-7 4.500M22 25h9.500" fill="none" stroke="#f2f2f2" stroke-width="2.400"/></svg></div>
    <!-- Docker -->
    <div class="slot running"><svg><use href="#docker" x="-3" y="-3" width="72" height="72"/></svg></div>
    <!-- Keychain -->
    <div class="slot running"><svg viewBox="0 0 66 66"><rect width="66" height="66" rx="15" fill="url(#gKeys)"/><circle cx="34" cy="14" r="8.500" fill="none" stroke="#8f8a80" stroke-width="2"/><g fill="#c3c2b8"><path d="m20 40-5 14 1 4 3-2 5-16z"/><circle cx="43.500" cy="26" r="7"/><path d="m43 28 6 29 4-2-1-6 1-3-2-14z"/><circle cx="35" cy="28" r="7"/><path d="M30 30h6v27l-3 4-2.500-4z"/></g><circle cx="20" cy="35.500" r="13.500" fill="#ef8f38" stroke="#f4c490" stroke-width="1"/><path fill="#fff" d="m13.500 36 9-4 3 6-5.500 4-5-1z"/><path d="m21.500 34-1-2.500q0-2.500 2-2.800 2 0 2.300 3.300" fill="none" stroke="#fff" stroke-width="1.500"/></svg></div>
    <!-- iMovie -->
    <div class="slot running"><svg><use href="#imovie" width="66" height="66"/></svg></div>
    <!-- Zoom -->
    <div class="slot running"><svg viewBox="0 0 66 66"><rect x="-3" y="-3" width="72" height="72" rx="20" fill="url(#gZoom)"/><path fill="#fff" d="M14 20h23q6 0 6 6v18q0 2-2.500 2H17q-6 0-6-6V23q0-3 3-3zm31 9 9-7.500q1.500-1 1.500 1v21q0 2-1.500 1L45 37z"/></svg></div>
    <!-- Preview -->
    <div class="slot running"><svg viewBox="0 0 66 66"><rect width="66" height="66" rx="12" fill="#f1f1f0"/><clipPath id="pic"><rect x="5" y="5" width="56" height="56" rx="8"/></clipPath><g clip-path="url(#pic)"><rect width="66" height="66" fill="url(#gSky)"/><path fill="#2d4e80" d="M0 35h66v31H0z"/><path fill="#2e3a44" d="m5 45 8-3 12 3 10 6H5z"/><path fill="#e8eef4" d="M5 50q8-5 14 0t14-2v14H5zM26 46l7-4 1 6z"/><path fill="#6b5a4a" d="m20 58 8-4 4 8H20z"/></g><path fill="#c3c7ca" d="M35 46h25l7 18q1 4-3 4.500H32q-4-.5-3-4.500z" stroke="#777" stroke-width="1"/><path fill="#eef1f3" d="M37 49h20l4 12H34z"/><path fill="#7d8ca0" d="m41 52 9-2 3 8-9 2z" opacity=".7"/><rect x="33" y="32" width="30" height="14" rx="4" fill="#151515"/><ellipse cx="48" cy="35" rx="14" ry="3" fill="#3a3a3a"/></svg></div>
    <div class="rule"></div>
    <!-- minimised windows -->
    <div class="slot"><svg viewBox="0 0 66 66"><rect x="-5" y="11" width="77" height="44" fill="#f2f4f7"/><path fill="#3b8fe0" d="M-5 11h77v3.500H-5z"/><path fill="#dbe4ea" d="M-5 14.500h15V55H-5z"/><path d="M-3 16.500h8M15 19h14M15 23h9M15 28h10" stroke="#8f9aa5" stroke-width=".8"/><path d="M24 19h6M5 25h4" stroke="#4a9be8" stroke-width="1.500"/><path d="M-5 54.300h15" stroke="#4fc0a0" stroke-width="1.500"/><use href="#docker" x="44" y="44" width="27" height="27"/></svg></div>
    <div class="slot"><svg viewBox="0 0 66 66"><rect x="-5" y="3" width="77" height="59.500" fill="#fff"/><path fill="#ece4e8" d="M-5 3h77v5.500H-5zM51.500 8.500H72v54H51.500z"/><path d="M18 6h20M-2 6h4M62 6h6" stroke="#b4adb2" stroke-width="1.200" stroke-dasharray="2 2"/><path d="M2 15.500h22M3 19h6M2 22h10M3 25h16M8 28h20M10 31h18M3 33.500h40M8 36h24M8 39h18M3 42h22M3 45h34M3 48h20M5 51h22M4 54h8" stroke="#8d8d90" stroke-width="1" stroke-dasharray="6 .8 3 .6"/><path d="M54 13h8M54 17.500h14M54 24h10M54 28h14M54 31h12M54 38h12M54 43h12" stroke="#b9b3b8" stroke-width=".9"/><path d="M65 34h4" stroke="#111" stroke-width="1.800"/><use href="#pages" x="45.500" y="45" width="25" height="25"/></svg></div>
    <div class="slot"><svg viewBox="0 0 66 66"><rect x="-5" y="3" width="77" height="59.500" fill="#fff"/><path fill="#ece4e8" d="M-5 3h77v5.500H-5zM51.500 8.500H72v54H51.500z"/><path d="M-4 4.500h5" stroke="#e5a050" stroke-width="1.400"/><path d="M18 6h20M-2 6.500h4M62 6h6" stroke="#b4adb2" stroke-width="1.200" stroke-dasharray="2 2"/><path d="M-2 12h22" stroke="#444" stroke-width="1.400"/><path d="M18 14h20M10 20h22" stroke="#8f96e6" stroke-width="1"/><path d="M-2 14h16M-2 17.500h50M-2 19.500h10M-2 23h12M-2 26h50M-1 28h30M-1 30h34M-1 32h26M-2 36h50M0 38h42M0 40h36M0 42h40M-2 46h14M-2 49h44M0 51h40M0 53.500h34M-2 57h20M-1 60h36" stroke="#88888b" stroke-width="1" stroke-dasharray="6 .8 3 .6"/><path d="m59 34 3-6 3 6zM55 37h14" fill="none" stroke="#bdb8bc" stroke-width=".9"/><use href="#pages" x="45.500" y="45" width="25" height="25"/></svg></div>
    <div class="slot"><svg viewBox="0 0 66 66"><rect x="-5" y="11" width="77" height="44" fill="#2c2c2d"/><path fill="#1d1d1e" d="M-5 11h77v24H-5z"/><path fill="#3b3b3d" d="M-5 35h77v1.500H-5zM2 13h40v2H2z"/><path fill="#c9b999" d="M5 18h7v4.500H5z"/><path fill="#e6e6ea" d="M13 18h8v4.500h-8z"/><path fill="#f5f6f7" d="M43 17.500h24.500v14.500H43z"/><path fill="#3d4a78" d="M45 20.500h8V29h-8z"/><circle cx="49" cy="24" r="2" fill="#c58a6c"/><path d="M56 23h6M56 26h8" stroke="#7d9ab0"/><path fill="#d6ccb6" d="M-2 42.500h38v4H-2z"/><path d="M-2 47.200h38" stroke="#3f72c8" stroke-width="1.200"/><path fill="#eee" d="M34.500 38h3v3h-3z"/><use href="#imovie" x="45.500" y="45" width="25" height="25"/></svg></div>
    <!-- Trash -->
    <div class="slot"><svg viewBox="0 0 66 66"><path fill="#dcdadc" d="M6 6 13 0l5-4 6 1 3-2 1 2 5 3 4-4 5 4 6 2 6-1 4 6-3 8H12z"/><path fill="#5c5e63" d="m11 4 5-4 3 4-3 6zM24-3l4 1-1 3zM33 3l6-3 4 5-5 5zM47 1l5 3-3 6-3-4zM8 7l4 3-3 2zM54 4l4 2-4 4z"/><path fill="#f4f4f4" d="m17 0 6 1-2 5-4 1zM36-3l4 3-5 2z"/><path fill="#52b7c6" d="m22 4 7-1-1 6-7 2z"/><path fill="#a43c34" d="m20 9 8-2-3 6zM38 8l7 2-5 2z"/><path fill="#3c62a4" d="m34 6 5 2-4 4z"/><path fill="url(#gBag)" d="M4 4q2 6 29 7Q60 10 62 4l-4.500 58Q57 69 33 69T9 62z" opacity=".97"/><path d="M4 4q2 6 29 7Q60 10 62 4" fill="none" stroke="#f6f6f6" stroke-width="1.500"/><path d="M15 17q8 14 28 4M20 30q14 12 30-8M18 46q12 8 26-4" fill="none" stroke="#e8e8e8" stroke-width="2.500" opacity=".6"/><path d="M9.500 62Q14 68 33 68.500T56.500 62" fill="none" stroke="#f7f7f7" stroke-width="2.500"/></svg></div>
  </footer>
</div>
<script src="https://cdn.jsdelivr.net/npm/bootstrap@5.3.0/dist/js/bootstrap.bundle.min.js"></script>
</body>
</html>
